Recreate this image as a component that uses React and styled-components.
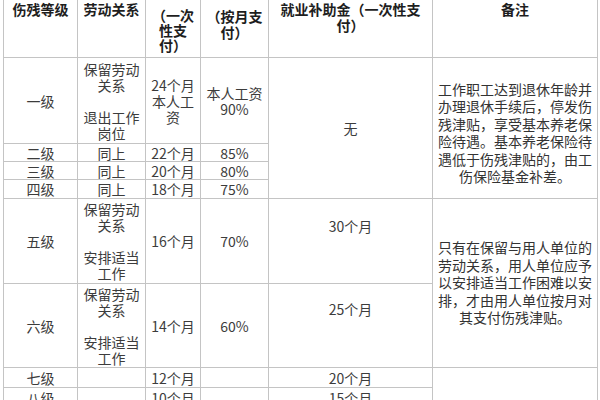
import React from "react";
import styled, { createGlobalStyle } from "styled-components";

const Global = createGlobalStyle`
  html, body { margin: 0; padding: 0; background: #ffffff; }
  body {
    font-family: "Noto Sans CJK SC", "Noto Sans", sans-serif;
    text-spacing-trim: space-all;
  }
`;

const Page = styled.div`
  width: 600px;
  height: 400px;
  overflow: hidden;
  background: #fff;
  padding-left: 3px;
  box-sizing: border-box;
`;

const Table = styled.table`
  margin-top: -1px;
  width: 594px;
  table-layout: fixed;
  border-collapse: collapse;
  font-size: 14px;
  color: #3c3c3c;
  text-spacing-trim: space-all;
`;

const Row = styled.tr`
  height: ${(p) => p.$h}px;
`;

const HeadCell = styled.th`
  border: 1px solid #c4c4c4;
  padding: ${(p) => p.$top || 1}px 1px 0;
  vertical-align: top;
  text-align: center;
  font-weight: 700;
  line-height: ${(p) => p.$lh || 16}px;
  color: #1e1e1e;
`;

const Cell = styled.td`
  border: 1px solid #c4c4c4;
  padding: 0 1px ${(p) => p.$bottom || 0}px;
  vertical-align: middle;
  text-align: center;
  line-height: 16px;
  overflow: hidden;
`;

const RemarkCell = styled(Cell)`
  padding: ${(p) => p.$top || 0}px 2px 0;
  line-height: 17.5px;
  color: #333;
`;

export default function App() {
  return (
    <Page>
      <Global />
      <Table>
        <colgroup>
          <col style={{ width: 74 }} />
          <col style={{ width: 68 }} />
          <col style={{ width: 55 }} />
          <col style={{ width: 68 }} />
          <col style={{ width: 164 }} />
          <col style={{ width: 165 }} />
        </colgroup>
        <tbody>
          <Row $h={58}>
            <HeadCell>伤残等级</HeadCell>
            <HeadCell>劳动关系</HeadCell>
            <HeadCell $top={8} $lh={15}>（一次性支付）</HeadCell>
            <HeadCell $top={8} $lh={16}>（按月支付）</HeadCell>
            <HeadCell>就业补助金（一次性支付）</HeadCell>
            <HeadCell>备注</HeadCell>
          </Row>
          <Row $h={86}>
            <Cell>一级</Cell>
            <Cell>
              保留劳动关系
              <br />
              <br />
              退出工作岗位
            </Cell>
            <Cell>24个月本人工资</Cell>
            <Cell>本人工资90%</Cell>
            <Cell rowSpan={4}>无</Cell>
            <RemarkCell rowSpan={4} $top={10}>
              工作职工达到退休年龄并办理退休手续后，停发伤残津贴，享受基本养老保险待遇。基本养老保险待遇低于伤残津贴的，由工伤保险基金补差。
            </RemarkCell>
          </Row>
          <Row $h={18}>
            <Cell>二级</Cell>
            <Cell>同上</Cell>
            <Cell>22个月</Cell>
            <Cell>85%</Cell>
          </Row>
          <Row $h={18}>
            <Cell>三级</Cell>
            <Cell>同上</Cell>
            <Cell>20个月</Cell>
            <Cell>80%</Cell>
          </Row>
          <Row $h={19}>
            <Cell>四级</Cell>
            <Cell>同上</Cell>
            <Cell>18个月</Cell>
            <Cell>75%</Cell>
          </Row>
          <Row $h={85}>
            <Cell>五级</Cell>
            <Cell>
              保留劳动关系
              <br />
              <br />
              安排适当工作
            </Cell>
            <Cell>16个月</Cell>
            <Cell>70%</Cell>
            <Cell $bottom={30}>30个月</Cell>
            <RemarkCell rowSpan={2}>
              只有在保留与用人单位的劳动关系，用人单位应予以安排适当工作困难以安排，才由用人单位按月对其支付伤残津贴。
            </RemarkCell>
          </Row>
          <Row $h={84}>
            <Cell>六级</Cell>
            <Cell>
              保留劳动关系
              <br />
              <br />
              安排适当工作
            </Cell>
            <Cell>14个月</Cell>
            <Cell>60%</Cell>
            <Cell $bottom={34}>25个月</Cell>
          </Row>
          <Row $h={20}>
            <Cell>七级</Cell>
            <Cell></Cell>
            <Cell>12个月</Cell>
            <Cell></Cell>
            <Cell>20个月</Cell>
            <RemarkCell rowSpan={2}></RemarkCell>
          </Row>
          <Row $h={20}>
            <Cell>八级</Cell>
            <Cell></Cell>
            <Cell>10个月</Cell>
            <Cell></Cell>
            <Cell>15个月</Cell>
          </Row>
        </tbody>
      </Table>
    </Page>
  );
}
